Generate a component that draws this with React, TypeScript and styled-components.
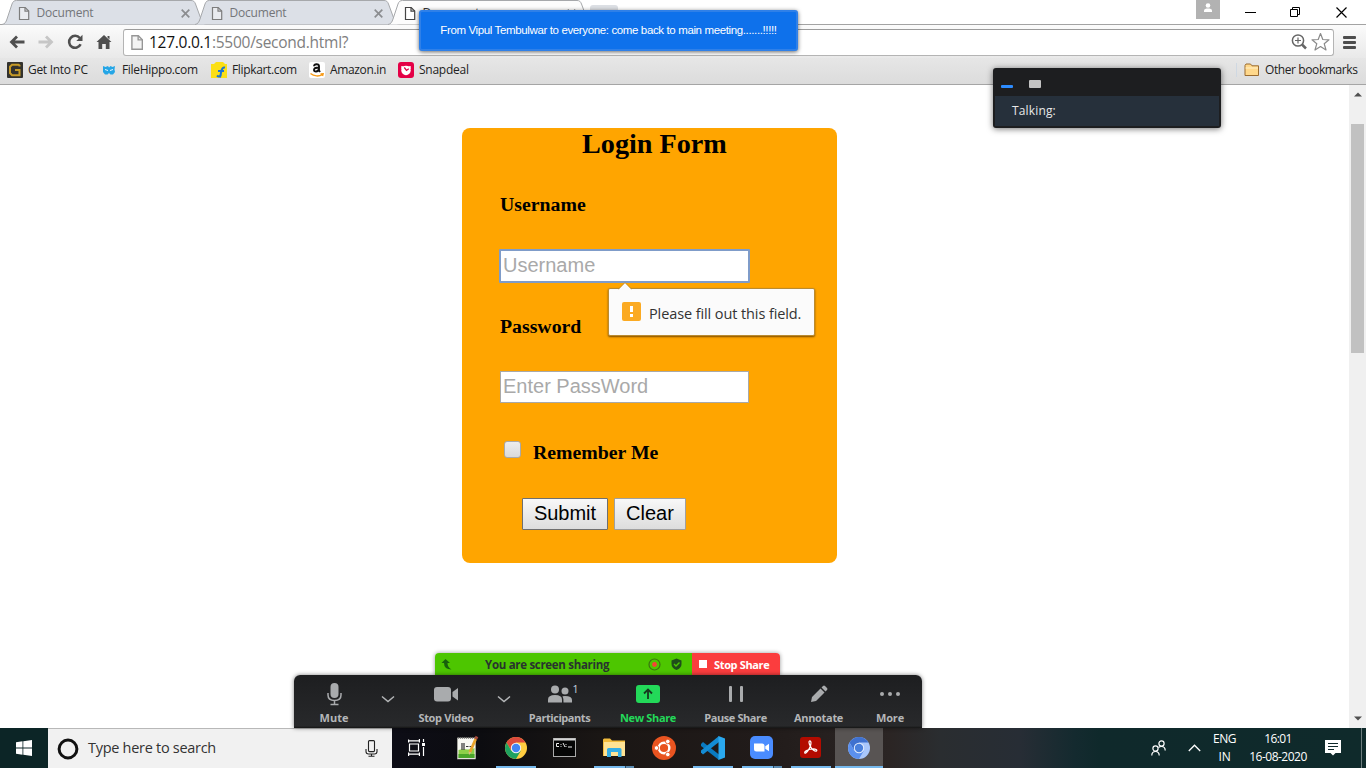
import React from "react";
import styled, { createGlobalStyle, css } from "styled-components";

const Global = createGlobalStyle`
  * { box-sizing: border-box; }
  html, body { margin: 0; padding: 0; overflow: hidden; background: #fff; }
  svg { display: block; flex: none; }
`;

const ui = `"Open Sans", "Noto Sans", sans-serif`;

const Desktop = styled.div`
  position: relative;
  width: 1366px;
  height: 768px;
  display: flex;
  flex-direction: column;
  overflow: hidden;
  font-family: ${ui};
  background: #fff;
`;

const Label = styled.span<{ $size: number; $ls?: number; $color?: string; $bold?: boolean }>`
  font-size: ${(p) => p.$size}px;
  letter-spacing: ${(p) => p.$ls ?? 0}px;
  color: ${(p) => p.$color ?? "inherit"};
  font-weight: ${(p) => (p.$bold ? 700 : 400)};
  white-space: nowrap;
  line-height: 1;
`;

/* ---------- tab strip ---------- */
const TabStrip = styled.div`
  height: 25px;
  display: flex;
  justify-content: space-between;
  background: #fff;
  border-bottom: 1px solid #a3a3a3;
  position: relative;
`;
const Tabs = styled.div`
  display: flex;
  padding-left: 2px;
`;
const TabBox = styled.div`
  position: relative;
  width: 193px;
  height: 25px;
  padding: 1px 0 0 16px;
  display: flex;
  align-items: center;
  gap: 5px;
  color: #737579;
`;
const TabShape = styled.svg`
  position: absolute;
  left: 0;
  top: 0;
`;
const TabTitle = styled(Label)`
  position: relative;
  width: 145px;
`;
const TabIcon = styled.div`
  position: relative;
  width: 14px;
`;
const WindowButtons = styled.div`
  display: flex;
  align-items: flex-start;
`;
const Profile = styled.div`
  width: 24px;
  height: 19px;
  background: #b2b2b2;
  display: flex;
  justify-content: center;
  padding-top: 3px;
  margin-right: 25px;
`;
const WinGlyph = styled.div<{ $gap: number }>`
  margin-right: ${(p) => p.$gap}px;
  padding-top: 7px;
`;

const PageIcon = ({ c = "#6b6b6b", fill = "#fff", w = 12, h = 15 }) => (
  <svg width={w} height={h} viewBox="0 0 12 15">
    <path d="M1.500 1.500H7.200L10.700 5V13.500H1.500Z" fill={fill} stroke={c} strokeWidth="1.200" />
    <path d="M7 1.500V5.200H10.700" fill="none" stroke={c} strokeWidth="1.200" />
  </svg>
);

const Tab = ({ active }: { active?: boolean }) => (
  <TabBox>
    <TabShape width="205" height="25" viewBox="0 0 205 25">
      <path
        d="M0 24.500C3 24 4 22 5 19L10 4C11 1.500 12 .5 14.500 .5H189C191.500 .5 192.500 1.500 193.500 4L199 19C200 22 201 24 203.500 24.500"
        fill={active ? "#fcfcfc" : "#dce0e7"}
        stroke="#a6a8ab"
      />
    </TabShape>
    <TabIcon><PageIcon c={active ? "#444" : "#7d7d7d"} fill={active ? "#fff" : "#e9ebef"} /></TabIcon>
    <TabTitle $size={12} $ls={-0.2} $color={active ? "#333" : undefined}>Document</TabTitle>
    <TabIcon>
      <svg width="9" height="9" viewBox="0 0 9 9">
        <path d="M.7 .7L8.300 8.300M8.300 .7L.7 8.300" stroke="#8b8d90" strokeWidth="1.700" />
      </svg>
    </TabIcon>
  </TabBox>
);

const NewTab = styled.div`
  margin: 5px 0 0 9px;
  width: 28px;
  height: 14px;
  border-radius: 3px;
  background: #dcdfe4;
`;

/* ---------- toolbar ---------- */
const Toolbar = styled.div`
  height: 33px;
  display: flex;
  align-items: center;
  padding: 2px 9px 0 9px;
  background: linear-gradient(#fbfbfb, #e9e9e9);
`;
const NavButtons = styled.div`
  width: 114px;
  display: flex;
  align-items: center;
  gap: 13px;
  padding-bottom: 1px;
`;
const AddressBar = styled.div`
  width: 1211px;
  height: 27px;
  border: 1px solid #b4b4b4;
  border-top-color: #9b9b9b;
  border-radius: 3px;
  background: #fff;
  display: flex;
  align-items: center;
  padding: 0 3px 1px 6px;
`;
const Url = styled.div`
  flex: 1;
  margin-left: 5px;
  padding-bottom: 1px;
  font-size: 15.500px;
  line-height: 20px;
  letter-spacing: -0.27px;
  color: #808080;
  b { font-weight: 400; color: #111; }
`;
const MenuBars = styled.div`
  margin-left: 9px;
  width: 13px;
  display: grid;
  gap: 2px;
  i { height: 3px; border-radius: 1px; background: #4d4d4d; }
`;

/* ---------- bookmarks ---------- */
const Bookmarks = styled.div`
  height: 27px;
  display: flex;
  align-items: center;
  padding: 0 8px 2px 7px;
  border-bottom: 1px solid #a5a5a5;
  background: linear-gradient(#e6e6e6, #dcdcdc);
  color: #222;
`;
const Bookmark = styled.div<{ $w: number }>`
  width: ${(p) => p.$w}px;
  display: flex;
  align-items: center;
  gap: 5px;
`;
const OtherBookmarks = styled(Bookmark)`
  margin-left: auto;
  border-left: 1px solid #cfd8e2;
  padding-left: 7px;
`;

/* ---------- page ---------- */
const Page = styled.div`
  flex: 1;
  display: flex;
  justify-content: space-between;
`;
const Content = styled.div`
  padding: 43px 0 0 462px;
`;
const Form = styled.div`
  width: 375px;
  height: 435px;
  border-radius: 8px;
  background: #ffa500;
  padding-left: 38px;
  display: flex;
  flex-direction: column;
  align-items: flex-start;
  font-family: "Liberation Serif", "Times New Roman", serif;
  font-weight: 700;
  color: #000;
`;
const Title = styled.h1`
  margin: 0 0 34px 82px;
  font-size: 28.200px;
  line-height: 32px;
  font-weight: 700;
`;
const FieldLabel = styled.label`
  font-size: 19.800px;
  line-height: 20px;
  height: 20px;
`;
const Field = styled.input<{ $focused?: boolean }>`
  width: 249px;
  height: 32px;
  margin: 35px 0;
  padding: 0 2px 1px;
  border-radius: 0;
  border: 1px solid #a9a9a9;
  ${(p) => p.$focused && css`
    width: 251px;
    height: 34px;
    margin: 35px 0 33px -1px;
    padding-bottom: 2px;
    border: 2px solid #7f9cc9;
    border-radius: 1px;
  `}
  outline: none;
  background: #fff;
  font: 20px "Liberation Sans", Arial, sans-serif;
  &::placeholder { color: #a9a9a9; opacity: 1; }
`;
const Remember = styled.div`
  display: flex;
  align-items: flex-start;
  margin: 4px 0 0 4px;
  gap: 12px;
`;
const Check = styled.span`
  width: 17px;
  height: 17px;
  margin-top: -1px;
  border: 1px solid #a9a9a9;
  border-radius: 3px;
  background: linear-gradient(#ededed, #dadada);
`;
const Actions = styled.div`
  display: flex;
  gap: 6px;
  margin: 36px 0 0 22px;
`;
const Button = styled.button<{ $w: number; $edge: string }>`
  width: ${(p) => p.$w}px;
  height: 32px;
  padding: 0 0 2px;
  border: 1px solid ${(p) => p.$edge};
  border-radius: 1px;
  background: linear-gradient(#f8f8f8, #dddddd);
  font: 20px "Liberation Sans", Arial, sans-serif;
  color: #000;
`;
const Tooltip = styled.div`
  position: absolute;
  left: 608px;
  top: 288px;
  width: 207px;
  height: 48px;
  border: 1px solid #b98b32;
  border-radius: 2px;
  box-shadow: 0 1px 2px rgba(70, 40, 0, 0.7);
  background: #fbfbfb;
  display: flex;
  align-items: center;
  padding-left: 13px;
  gap: 8px;
  color: #333;
`;
const TooltipText = styled(Label)`
  padding-top: 4px;
`;
const TooltipArrow = styled.svg`
  position: absolute;
  left: 9px;
  top: -7px;
`;
const WarnIcon = styled.div`
  width: 19px;
  height: 19px;
  margin-top: -1px;
  border-radius: 2px;
  background: #fbaa22;
  display: grid;
  justify-content: center;
  align-content: center;
  gap: 2px;
  i { width: 3px; height: 6px; background: #fff; }
  i + i { height: 3px; }
`;
const ScrollBar = styled.div`
  width: 17px;
  display: flex;
  flex-direction: column;
  align-items: center;
  background: #f0f0f0;
  padding: 7px 0;
`;
const Thumb = styled.div`
  width: 13px;
  height: 229px;
  margin: 27px 0 auto;
  background: #c1c1c1;
`;

/* ---------- floating windows ---------- */
const Banner = styled.div`
  position: absolute;
  left: 419px;
  top: 10px;
  width: 379px;
  height: 41px;
  border: 2px solid #2f80e8;
  border-radius: 3px;
  background: #0e71eb;
  box-shadow: 0 1px 4px rgba(0, 0, 0, 0.6);
  color: #fff;
  display: flex;
  align-items: center;
  justify-content: center;
  font-family: "Liberation Sans", Arial, sans-serif;
`;
const Talking = styled.div`
  position: absolute;
  left: 993px;
  top: 68px;
  width: 228px;
  height: 60px;
  border-radius: 3px;
  background: #1d1e20;
  padding: 0 2px 2px;
  box-shadow: 0 1px 6px rgba(0, 0, 0, 0.55);
`;
const TalkingHead = styled.div`
  height: 28px;
  display: flex;
  align-items: flex-start;
  padding: 12px 0 0 6px;
  gap: 16px;
`;
const Dash = styled.i`
  width: 12px;
  height: 3px;
  margin-top: 5px;
  border-radius: 1px;
  background: #2d8cff;
`;
const Block = styled.i`
  width: 12px;
  height: 8px;
  border-radius: 1px;
  background: #c4c4c4;
`;
const TalkingBody = styled.div`
  height: 30px;
  padding-left: 17px;
  display: flex;
  align-items: center;
  background: #26303b;
  color: #e8e8e8;
`;
const ShareStrip = styled.div`
  position: absolute;
  left: 435px;
  top: 653px;
  width: 345px;
  height: 23px;
  display: flex;
  border-radius: 4px 4px 0 0;
  overflow: hidden;
`;
const ShareShadow = styled(ShareStrip)`
  overflow: visible;
  box-shadow: 0 0 4px rgba(0, 0, 0, 0.4);
`;
const Sharing = styled.div`
  width: 257px;
  padding: 0 9px 0 6px;
  display: flex;
  align-items: center;
  background: #4dc600;
  color: #28332f;
`;
const SharingText = styled(Label)`
  margin: 0 auto 0 33px;
`;
const StatusIcons = styled.div`
  display: flex;
  gap: 9px;
`;
const StopShare = styled.div`
  width: 88px;
  padding: 0 0 1px 7px;
  display: flex;
  align-items: center;
  gap: 7px;
  background: #fb3d3e;
  color: #fff;
  i { width: 8px; height: 8px; background: #fff; }
`;
const MeetingBar = styled.div`
  position: absolute;
  left: 294px;
  top: 675px;
  width: 628px;
  height: 53px;
  border-radius: 6px 6px 0 0;
  background: linear-gradient(#1d1e20, #28292b 96%, #151515);
  box-shadow: 0 0 4px rgba(0, 0, 0, 0.5);
  color: #b4b6b8;
  display: flex;
`;
const Tool = styled.div<{ $w: number; $green?: boolean }>`
  width: ${(p) => p.$w}px;
  display: flex;
  flex-direction: column;
  align-items: center;
  justify-content: space-between;
  padding: 7px 0 5px;
  color: ${(p) => (p.$green ? "#23d959" : "inherit")};
`;
const ToolIcon = styled.div`
  height: 24px;
  display: flex;
  align-items: center;
`;

/* ---------- taskbar ---------- */
const Taskbar = styled.div`
  height: 40px;
  display: flex;
  background: linear-gradient(90deg, #0b2526 0, #0c1c20 48px, #0d0d16 390px, #0c0c10 480px, #1a1614 600px, #211b1a 760px, #2b2524 890px, #2a2d30 940px, #272d35 1020px, #142a2f 1075px, #0f292b 1100px, #0f2a2b 100%);
  color: #fff;
`;
const Start = styled.div`
  width: 48px;
  display: grid;
  place-items: center;
  background: #0c2526;
`;
const Search = styled.div`
  width: 344px;
  background: #f1f1f1;
  border-top: 1px solid #b8b8b8;
  display: flex;
  align-items: center;
  padding: 0 14px 0 9px;
  color: #333;
`;
const SearchText = styled(Label)`
  flex: 1;
  margin-left: 9px;
`;
const TaskButton = styled.div<{ $w?: number; $bar?: boolean; $active?: boolean; $stacked?: boolean }>`
  width: ${(p) => p.$w ?? 49}px;
  height: 40px;
  display: flex;
  flex-direction: column;
  align-items: center;
  justify-content: flex-end;
  gap: 5px;
  background: ${(p) => (p.$active ? "#585453" : "transparent")};
  &::after {
    content: "";
    height: 2px;
    width: ${(p) => (p.$active ? 48 : 40)}px;
    background: ${(p) =>
      p.$stacked ? "linear-gradient(90deg, #76b9ed 31px, #2e4a60 31px, #2e4a60 32px, #5c8cb2 32px)" : p.$bar ? "#76b9ed" : "transparent"};
  }
`;
const AppGlyph = styled.div`
  height: 27px;
  display: flex;
  align-items: center;
`;
const Tray = styled.div`
  margin-left: auto;
  display: flex;
  align-items: center;
`;
const TrayCol = styled.div<{ $w: number }>`
  width: ${(p) => p.$w}px;
  display: flex;
  flex-direction: column;
  align-items: center;
  gap: 6px;
  padding-bottom: 1px;
`;
const ShowDesktop = styled.div`
  width: 5px;
  height: 40px;
  border-left: 1px solid #6d7d7e;
`;

const Mic = () => (
  <svg width="15" height="23" viewBox="0 0 15 23">
    <rect x="3.500" y="0" width="8" height="15" rx="4" fill="#a9abad" />
    <path d="M1 10v2c0 3.500 2.500 5.500 6.500 5.500S14 15.500 14 12v-2M7.500 17.500V21M3.500 21.500h8" fill="none" stroke="#a9abad" strokeWidth="1.500" />
  </svg>
);
const Chevron = () => (
  <svg width="14" height="24" viewBox="0 0 14 24">
    <path d="M1 14.500L7 19.500L13 14.500" fill="none" stroke="#b4b6b8" strokeWidth="1.500" />
  </svg>
);

export default function App() {
  return (
    <Desktop>
      <Global />
      <TabStrip>
        <Tabs>
          <Tab /><Tab /><Tab active />
          <NewTab />
        </Tabs>
        <WindowButtons>
          <Profile>
            <svg width="10" height="10" viewBox="0 0 10 10"><circle cx="5" cy="2.500" r="2.300" fill="#fff" /><path d="M1 9V7.500C1 6 3 5.600 5 5.600S9 6 9 7.500V9Z" fill="#fff" /></svg>
          </Profile>
          <WinGlyph $gap={34}><svg width="11" height="11"><path d="M0 5.500H11" stroke="#000" /></svg></WinGlyph>
          <WinGlyph $gap={35}><svg width="11" height="11" fill="none" stroke="#000"><path d="M.5 2.500H7.500V9.500H.5ZM2.500 2.500V.5H9.500V7.500H7.500" /></svg></WinGlyph>
          <WinGlyph $gap={19}><svg width="11" height="11"><path d="M.5 .5L10.500 10.500M10.500 .5L.5 10.500" stroke="#000" strokeWidth="1.200" /></svg></WinGlyph>
        </WindowButtons>
      </TabStrip>

      <Toolbar>
        <NavButtons>
          <svg width="16" height="14" viewBox="0 0 16 14"><path d="M15.500 7H3M8 1.500L2.500 7L8 12.500" fill="none" stroke="#4f4f4f" strokeWidth="2.800" /></svg>
          <svg width="16" height="14" viewBox="0 0 16 14"><path d="M.5 7H13M8 1.500L13.500 7L8 12.500" fill="none" stroke="#c6c6c6" strokeWidth="2.800" /></svg>
          <svg width="16" height="16" viewBox="0 0 16 16"><path d="M12.800 4A6 6 0 1 0 13.600 10.300" fill="none" stroke="#4f4f4f" strokeWidth="2.600" /><path d="M15.500 .8V7H9.300Z" fill="#4f4f4f" /></svg>
          <svg width="16" height="16" viewBox="0 0 16 16"><path d="M8 1L15.500 8H13.500V15H9.800V10H6.200V15H2.500V8H.5ZM11.500 2h2v3.500l-2-2Z" fill="#4f4f4f" /></svg>
        </NavButtons>
        <AddressBar>
          <PageIcon w={14} h={17} c="#969696" fill="#f4f4f4" />
          <Url><b>127.0.0.1</b>:5500/second.html?</Url>
          <svg width="20" height="18" viewBox="0 0 20 18" fill="none" stroke="#666" strokeWidth="1.500"><circle cx="8" cy="7.500" r="5.600" /><path d="M5 7.500h6M8 4.500v6" strokeWidth="1.200" /><path d="M12 11.500L16 15.500" strokeWidth="2.500" /></svg>
          <svg width="20" height="20" viewBox="0 0 20 20"><path d="M10.500 1.500L12.800 7.500L19 7.800L14.200 11.700L16 18L10.500 14.500L5 18L6.800 11.700L2 7.800L8.200 7.500Z" fill="#fff" stroke="#8a8a8a" strokeWidth="1.200" strokeLinejoin="round" /></svg>
        </AddressBar>
        <MenuBars><i /><i /><i /></MenuBars>
      </Toolbar>

      <Bookmarks>
        <Bookmark $w={94}>
          <svg width="16" height="16" viewBox="0 0 16 16"><rect width="16" height="16" rx="1" fill="#33322d" /><path d="M12.500 4.500V3.500L11.500 2.700H5L3 4.700V11L5 13.200H12.500V8H8" fill="none" stroke="#c79b27" strokeWidth="2" /></svg>
          <Label $size={12} $ls={-0.3}>Get Into PC</Label>
        </Bookmark>
        <Bookmark $w={110}>
          <svg width="16" height="16" viewBox="0 0 16 16"><path d="M2 4L4.500 5L7 4L8 5.500L9.500 4L11.500 5L14 4L13.500 7.500L14 10L12 12.500H9.500L8 11L6.500 12.500H4L2 10Z" fill="#25a6e6" /><path d="M4 7.500l3 1M12 7.500l-3 1" stroke="#e8f6ff" /></svg>
          <Label $size={12} $ls={-0.33}>FileHippo.com</Label>
        </Bookmark>
        <Bookmark $w={98}>
          <svg width="16" height="16" viewBox="0 0 16 16"><path d="M0 2H3L5 0H12L14 2H16V16H0Z" fill="#fbdf16" /><path d="M14 5.500C11.500 5 11 6.500 10.500 8.500L9 15.500M7 9h6M6 13.500c1.500 1.500 3.500 1 4-1" fill="none" stroke="#1c74d4" strokeWidth="2" /></svg>
          <Label $size={12} $ls={-0.35}>Flipkart.com</Label>
        </Bookmark>
        <Bookmark $w={89}>
          <svg width="16" height="16" viewBox="0 0 16 16"><rect width="16" height="16" rx="2" fill="#fff" /><path d="M5 4.300C5.200 1.700 10 1.400 10 4V8.500L11 10M9.800 5.500C6.500 5.500 5 6.300 5 8C5 10.300 9 10 9.800 7.300" fill="none" stroke="#111" strokeWidth="1.900" /><path d="M1.500 11.500C5 14.500 10 14.700 13.500 12.500M11.500 11.800L14.200 11.700L13.600 14" fill="none" stroke="#f79a16" strokeWidth="1.300" /></svg>
          <Label $size={12} $ls={-0.35}>Amazon.in</Label>
        </Bookmark>
        <Bookmark $w={90}>
          <svg width="16" height="16" viewBox="0 0 16 16"><rect width="16" height="16" rx="3" fill="#e40046" /><circle cx="8" cy="8.500" r="4.700" fill="#fff" /><path d="M3.300 7.500V4L6.500 4.500ZM9.500 4.500L12.700 4V7.500Z" fill="#fff" /><path d="M6.300 5.500L8.500 8.300L10.800 6.800" fill="none" stroke="#e40046" strokeWidth="1.300" /></svg>
          <Label $size={12} $ls={-0.25}>Snapdeal</Label>
        </Bookmark>
        <OtherBookmarks $w={122}>
          <svg width="16" height="14" viewBox="0 0 16 14"><path d="M1 12.500V2.500L2 1H6.500L8 2.800H14.500V12.500Z" fill="#ffd88b" stroke="#9a6b30" /><path d="M1.500 5H14" stroke="#fff0c8" /></svg>
          <Label $size={12} $ls={-0.4}>Other bookmarks</Label>
        </OtherBookmarks>
      </Bookmarks>

      <Page>
        <Content>
          <Form>
            <Title>Login Form</Title>
            <FieldLabel>Username</FieldLabel>
            <Field $focused placeholder="Username" />
            <FieldLabel>Password</FieldLabel>
            <Field placeholder="Enter PassWord" />
            <Remember><Check /><FieldLabel>Remember Me</FieldLabel></Remember>
            <Actions>
              <Button $w={86} $edge="#6f6f6f">Submit</Button>
              <Button $w={72} $edge="#a0a0a0">Clear</Button>
            </Actions>
          </Form>
        </Content>
        <ScrollBar>
          <svg width="8" height="5" viewBox="0 0 8 5"><path d="M0 4.500L4 .5L8 4.500Z" fill="#505050" /></svg>
          <Thumb />
          <svg width="8" height="5" viewBox="0 0 8 5"><path d="M0 .5L4 4.500L8 .5Z" fill="#505050" /></svg>
        </ScrollBar>
      </Page>

      <Taskbar>
        <Start>
          <svg width="16" height="16" viewBox="0 0 16 16" fill="#fff"><path d="M0 2.300L6.500 1.300V7.500H0ZM7.300 1.200L16 0V7.500H7.300ZM0 8.500H6.500V14.700L0 13.700ZM7.300 8.500H16V16L7.300 14.800Z" /></svg>
        </Start>
        <Search>
          <svg width="22" height="22" viewBox="0 0 22 22"><circle cx="11" cy="11" r="8.900" fill="none" stroke="#111" strokeWidth="3" /></svg>
          <SearchText $size={14.500} $ls={-0.29}>Type here to search</SearchText>
          <svg width="13" height="17" viewBox="0 0 13 17" fill="none" stroke="#222" strokeWidth="1.100"><rect x="3.500" y=".6" width="6" height="11" rx="1" /><path d="M1 9v2.500c0 1.500 1 2.500 2.500 2.500h6c1.500 0 2.500-1 2.500-2.500V9M6.500 14v2M3.500 16.300h6" /></svg>
        </Search>
        <TaskButton $w={50}><AppGlyph>
          <svg width="18" height="17" viewBox="0 0 18 17" fill="none" stroke="#fff" strokeWidth="1.200"><path d="M.6 3.600V.6M.6 1.800H11.400M11.400 0V3.600M1.500 5H10.500V12H1.500ZM.6 17V13.500M.6 15.200H11.400M11.400 17V13.500M15.500 0V3M15.500 8V17" /><path d="M14 5.500h3" strokeWidth="3" /></svg>
        </AppGlyph></TaskButton>
        <TaskButton><AppGlyph>
          <svg width="24" height="25" viewBox="0 0 24 25"><rect x="2.500" y="3" width="18" height="21" fill="#f7f7f2" stroke="#b9b9b0" strokeWidth=".6" /><path d="M3.500 15C8 13 14 16 19.500 13V23H3.500Z" fill="#8ed04a" /><path d="M3.500 19h16v4H3.500Z" fill="#4aa52a" /><path d="M3 3h17" stroke="#777" strokeWidth="1.600" strokeDasharray="1 1" /><path d="M7 8v7M9 8v7M11 11.500h2.500M14.500 11.500h2" stroke="#333" strokeWidth="1.200" /><path d="M20.700 4L15 17" stroke="#e8a32a" strokeWidth="2.800" /><path d="M22 1.500L20.700 4" stroke="#a34839" strokeWidth="3" /><path d="M13.600 16.500L14 20L16.300 17.600Z" fill="#d8b98a" /></svg>
        </AppGlyph></TaskButton>
        <TaskButton $bar><AppGlyph>
          <svg width="22" height="22" viewBox="0 0 22 22"><circle cx="11" cy="11" r="11" fill="#ffcd40" /><path d="M1.500 5.500A11 11 0 0 1 20.500 5.500H11L6.300 13.800Z" fill="#dc4a3d" /><path d="M1.500 5.500A11 11 0 0 0 11 22L15.800 13.700L6.200 13.700Z" fill="#1fa260" /><circle cx="11" cy="11" r="5.200" fill="#f4f4f4" /><circle cx="11" cy="11" r="4.200" fill="#4285f4" /></svg>
        </AppGlyph></TaskButton>
        <TaskButton><AppGlyph>
          <svg width="23" height="19" viewBox="0 0 23 19"><rect x=".5" y=".5" width="22" height="18" fill="#060606" stroke="#aaa" /><path d="M1 1.500H22" stroke="#d5d5d5" strokeWidth="2" /><path d="M6 5.500H3.500V8.500H6M8 6v0.900M8 8v.9M10 5l2 4M13 6v.9M13 8v.9M15 9h4" fill="none" stroke="#eee" /></svg>
        </AppGlyph></TaskButton>
        <TaskButton $w={50} $stacked><AppGlyph>
          <svg width="23" height="20" viewBox="0 0 23 20"><path d="M0 1.500L1 .5H7L9 2.500H22V18H0Z" fill="#f2bc3d" /><path d="M1 4H22V18H1Z" fill="#ffe394" /><path d="M4 19V11.500Q4 10 5.500 10H17Q18.500 10 18.500 11.500V19H15V14H8V19Z" fill="#35aee5" /></svg>
        </AppGlyph></TaskButton>
        <TaskButton><AppGlyph>
          <svg width="24" height="24" viewBox="0 0 24 24"><circle cx="12" cy="12" r="12" fill="#e95420" /><circle cx="12" cy="12" r="5.300" fill="none" stroke="#fff" strokeWidth="2.400" /><g fill="#fff" stroke="#e95420" strokeWidth=".9"><circle cx="4.500" cy="12" r="2.300" /><circle cx="15.800" cy="5.500" r="2.300" /><circle cx="15.800" cy="18.500" r="2.300" /></g></svg>
        </AppGlyph></TaskButton>
        <TaskButton $bar><AppGlyph>
          <svg width="24" height="24" viewBox="0 0 24 24"><path d="M0 8L2 6L18 18.500V24L0 10Z" fill="#0a7ac0" /><path d="M0 16.500L2 18.500L18 6V0L0 14.500Z" fill="#148cd4" /><path d="M17.500 0L24 2.500V21.500L17.500 24Z" fill="#2aa8ee" /></svg>
        </AppGlyph></TaskButton>
        <TaskButton $stacked><AppGlyph>
          <svg width="23" height="23" viewBox="0 0 23 23"><rect width="23" height="23" rx="5" fill="#4a8cff" /><path d="M4 7.500H12Q14.500 7.500 14.500 10V15.500H6.500Q4 15.500 4 13ZM15.300 10.300L19 7.700V15.300L15.300 12.700Z" fill="#fff" /></svg>
        </AppGlyph></TaskButton>
        <TaskButton $bar><AppGlyph>
          <svg width="21" height="21" viewBox="0 0 21 21"><rect width="21" height="21" rx="3" fill="#b30b00" /><path d="M9.500 4C11.500 3.500 11.300 7 10 10C8.500 13.500 6 17 4.800 16C4 14.500 8 12.500 12 12C16 11.500 17.500 13 16.500 14C15 15 11.500 12 10.200 9C9 6.500 8.700 4.500 9.500 4Z" fill="none" stroke="#fff" strokeWidth="1.200" /></svg>
        </AppGlyph></TaskButton>
        <TaskButton $w={48} $bar $active><AppGlyph>
          <svg width="22" height="22" viewBox="0 0 22 22"><circle cx="11" cy="11" r="11" fill="#a9c7fb" /><path d="M1.500 5.500A11 11 0 0 1 20.500 5.500H11L6.300 13.800Z" fill="#3f71cf" /><path d="M1.500 5.500A11 11 0 0 0 11 22L15.800 13.700L6.200 13.700Z" fill="#5b90ee" /><circle cx="11" cy="11" r="5.200" fill="#e4edfc" /><circle cx="11" cy="11" r="4.200" fill="#4a80dc" /></svg>
        </AppGlyph></TaskButton>
        <Tray>
          <TrayCol $w={26}><svg width="15" height="16" viewBox="0 0 15 16" fill="none" stroke="#fff" strokeWidth="1.200"><circle cx="10.500" cy="3.500" r="2.600" /><circle cx="4.500" cy="8.500" r="2.600" /><path d="M.8 15.500Q.8 11.500 4.500 11.500T8.200 15.500M7.500 7.500Q8.500 6.500 10.500 6.500Q14.200 6.500 14.200 10.500" /></svg></TrayCol>
          <TrayCol $w={47}><svg width="13" height="8" viewBox="0 0 13 8"><path d="M.8 7L6.500 1.200L12.200 7" fill="none" stroke="#fff" strokeWidth="1.300" /></svg></TrayCol>
          <TrayCol $w={13}><Label $size={12} $ls={-0.5}>ENG</Label><Label $size={12} $ls={-0.3}>IN</Label></TrayCol>
          <TrayCol $w={94}><Label $size={12} $ls={-0.6}>16:01</Label><Label $size={12} $ls={-0.5}>16-08-2020</Label></TrayCol>
          <svg width="16" height="16" viewBox="0 0 16 16"><path d="M0 0H16V13H10.500L8 15.500L5.500 13H0Z" fill="#fff" /><path d="M3 3.500H13M3 6.500H13M3 9.500H9" stroke="#10292b" /></svg>
          <TrayCol $w={20} />
          <ShowDesktop />
        </Tray>
      </Taskbar>

      <Tooltip>
        <TooltipArrow width="16" height="8" viewBox="0 0 16 8"><path d="M.5 7.500L7 .8L13.500 7.500V8H.5Z" fill="#fbfbfb" /><path d="M.5 7L7 .6L13.500 7" fill="none" stroke="#b98b32" strokeWidth=".8" /></TooltipArrow>
        <WarnIcon><i /><i /></WarnIcon>
        <TooltipText $size={14.500} $ls={-0.1}>Please fill out this field.</TooltipText>
      </Tooltip>

      <Banner><Label $size={11.500} $ls={-0.37}>From Vipul Tembulwar to everyone: come back to main meeting.......!!!!!</Label></Banner>

      <Talking>
        <TalkingHead><Dash /><Block /></TalkingHead>
        <TalkingBody><Label $size={12} $ls={0.15}>Talking:</Label></TalkingBody>
      </Talking>

      <ShareShadow />
      <ShareStrip>
        <Sharing>
          <svg width="11" height="11" viewBox="0 0 11 11"><path d="M4.500 0L9 4H6.500Q6.500 8 10.500 10.500Q3 10.500 3 4H.5Z" fill="#17600c" /></svg>
          <SharingText $size={11.500} $ls={-0.3} $bold>You are screen sharing</SharingText>
          <StatusIcons>
            <svg width="13" height="13" viewBox="0 0 13 13"><circle cx="6.500" cy="6.500" r="5.500" fill="none" stroke="#3a7410" strokeWidth="1.200" /><circle cx="6.500" cy="6.500" r="2.400" fill="#f44336" /></svg>
            <svg width="13" height="13" viewBox="0 0 13 13"><path d="M6.500 .5L11.500 2.500V6Q11.500 10 6.500 12Q1.500 10 1.500 6V2.500Z" fill="#1e4d1a" /><path d="M4 6L6 8L9.500 4.500" fill="none" stroke="#4dc600" strokeWidth="1.400" /></svg>
          </StatusIcons>
        </Sharing>
        <StopShare><i /><Label $size={11} $ls={-0.35} $bold>Stop Share</Label></StopShare>
      </ShareStrip>

      <MeetingBar>
        <Tool $w={80}><ToolIcon><Mic /></ToolIcon><Label $size={11} $bold>Mute</Label></Tool>
        <Tool $w={28}><ToolIcon><Chevron /></ToolIcon></Tool>
        <Tool $w={88}><ToolIcon><svg width="24" height="15" viewBox="0 0 24 15" fill="#a9abad"><rect width="17" height="14.500" rx="3" /><path d="M18.500 5L24 1V13.500L18.500 9.500Z" /></svg></ToolIcon><Label $size={11} $ls={-0.3} $bold>Stop Video</Label></Tool>
        <Tool $w={28}><ToolIcon><Chevron /></ToolIcon></Tool>
        <Tool $w={83}><ToolIcon><svg width="42" height="20" viewBox="-9 0 42 20" fill="#a9abad"><circle cx="7" cy="5.500" r="4" /><path d="M0 18.500V15.500Q0 11 7 11T14 15.500V18.500Z" /><circle cx="17" cy="7" r="3.500" /><path d="M15.500 18.500H24V16Q24 12 17 12Q15.500 12 14.500 12.300Q15.500 14 15.500 18.500Z" /><text x="24.500" y="9" fontSize="10.500" fontFamily="Open Sans" fill="#c8d4e0">1</text></svg></ToolIcon><Label $size={11} $ls={-0.45} $bold>Participants</Label></Tool>
        <Tool $w={94} $green><ToolIcon><svg width="24" height="18" viewBox="0 0 24 18"><rect width="24" height="18" rx="3" fill="#23d959" /><path d="M12 14V5M8 8.500L12 4.500L16 8.500" fill="none" stroke="#16391f" strokeWidth="1.800" /></svg></ToolIcon><Label $size={11} $ls={-0.35} $bold>New Share</Label></Tool>
        <Tool $w={81}><ToolIcon><svg width="14" height="16" viewBox="0 0 14 16" fill="#a9abad"><rect width="3" height="16" rx="1" /><rect x="11" width="3" height="16" rx="1" /></svg></ToolIcon><Label $size={11} $ls={-0.4} $bold>Pause Share</Label></Tool>
        <Tool $w={85}><ToolIcon><svg width="18" height="18" viewBox="0 0 18 18" fill="#a9abad"><path d="M1 17L2 12L10.500 3.500L14.500 7.500L6 16ZM11.500 2.500L13 1Q14 0 15 1L17 3Q18 4 17 5L15.500 6.500Z" /></svg></ToolIcon><Label $size={11} $ls={-0.3} $bold>Annotate</Label></Tool>
        <Tool $w={58}><ToolIcon><svg width="20" height="4" viewBox="0 0 20 4" fill="#a9abad"><circle cx="2" cy="2" r="2" /><circle cx="10" cy="2" r="2" /><circle cx="18" cy="2" r="2" /></svg></ToolIcon><Label $size={11} $ls={-0.15} $bold>More</Label></Tool>
      </MeetingBar>
    </Desktop>
  );
}
